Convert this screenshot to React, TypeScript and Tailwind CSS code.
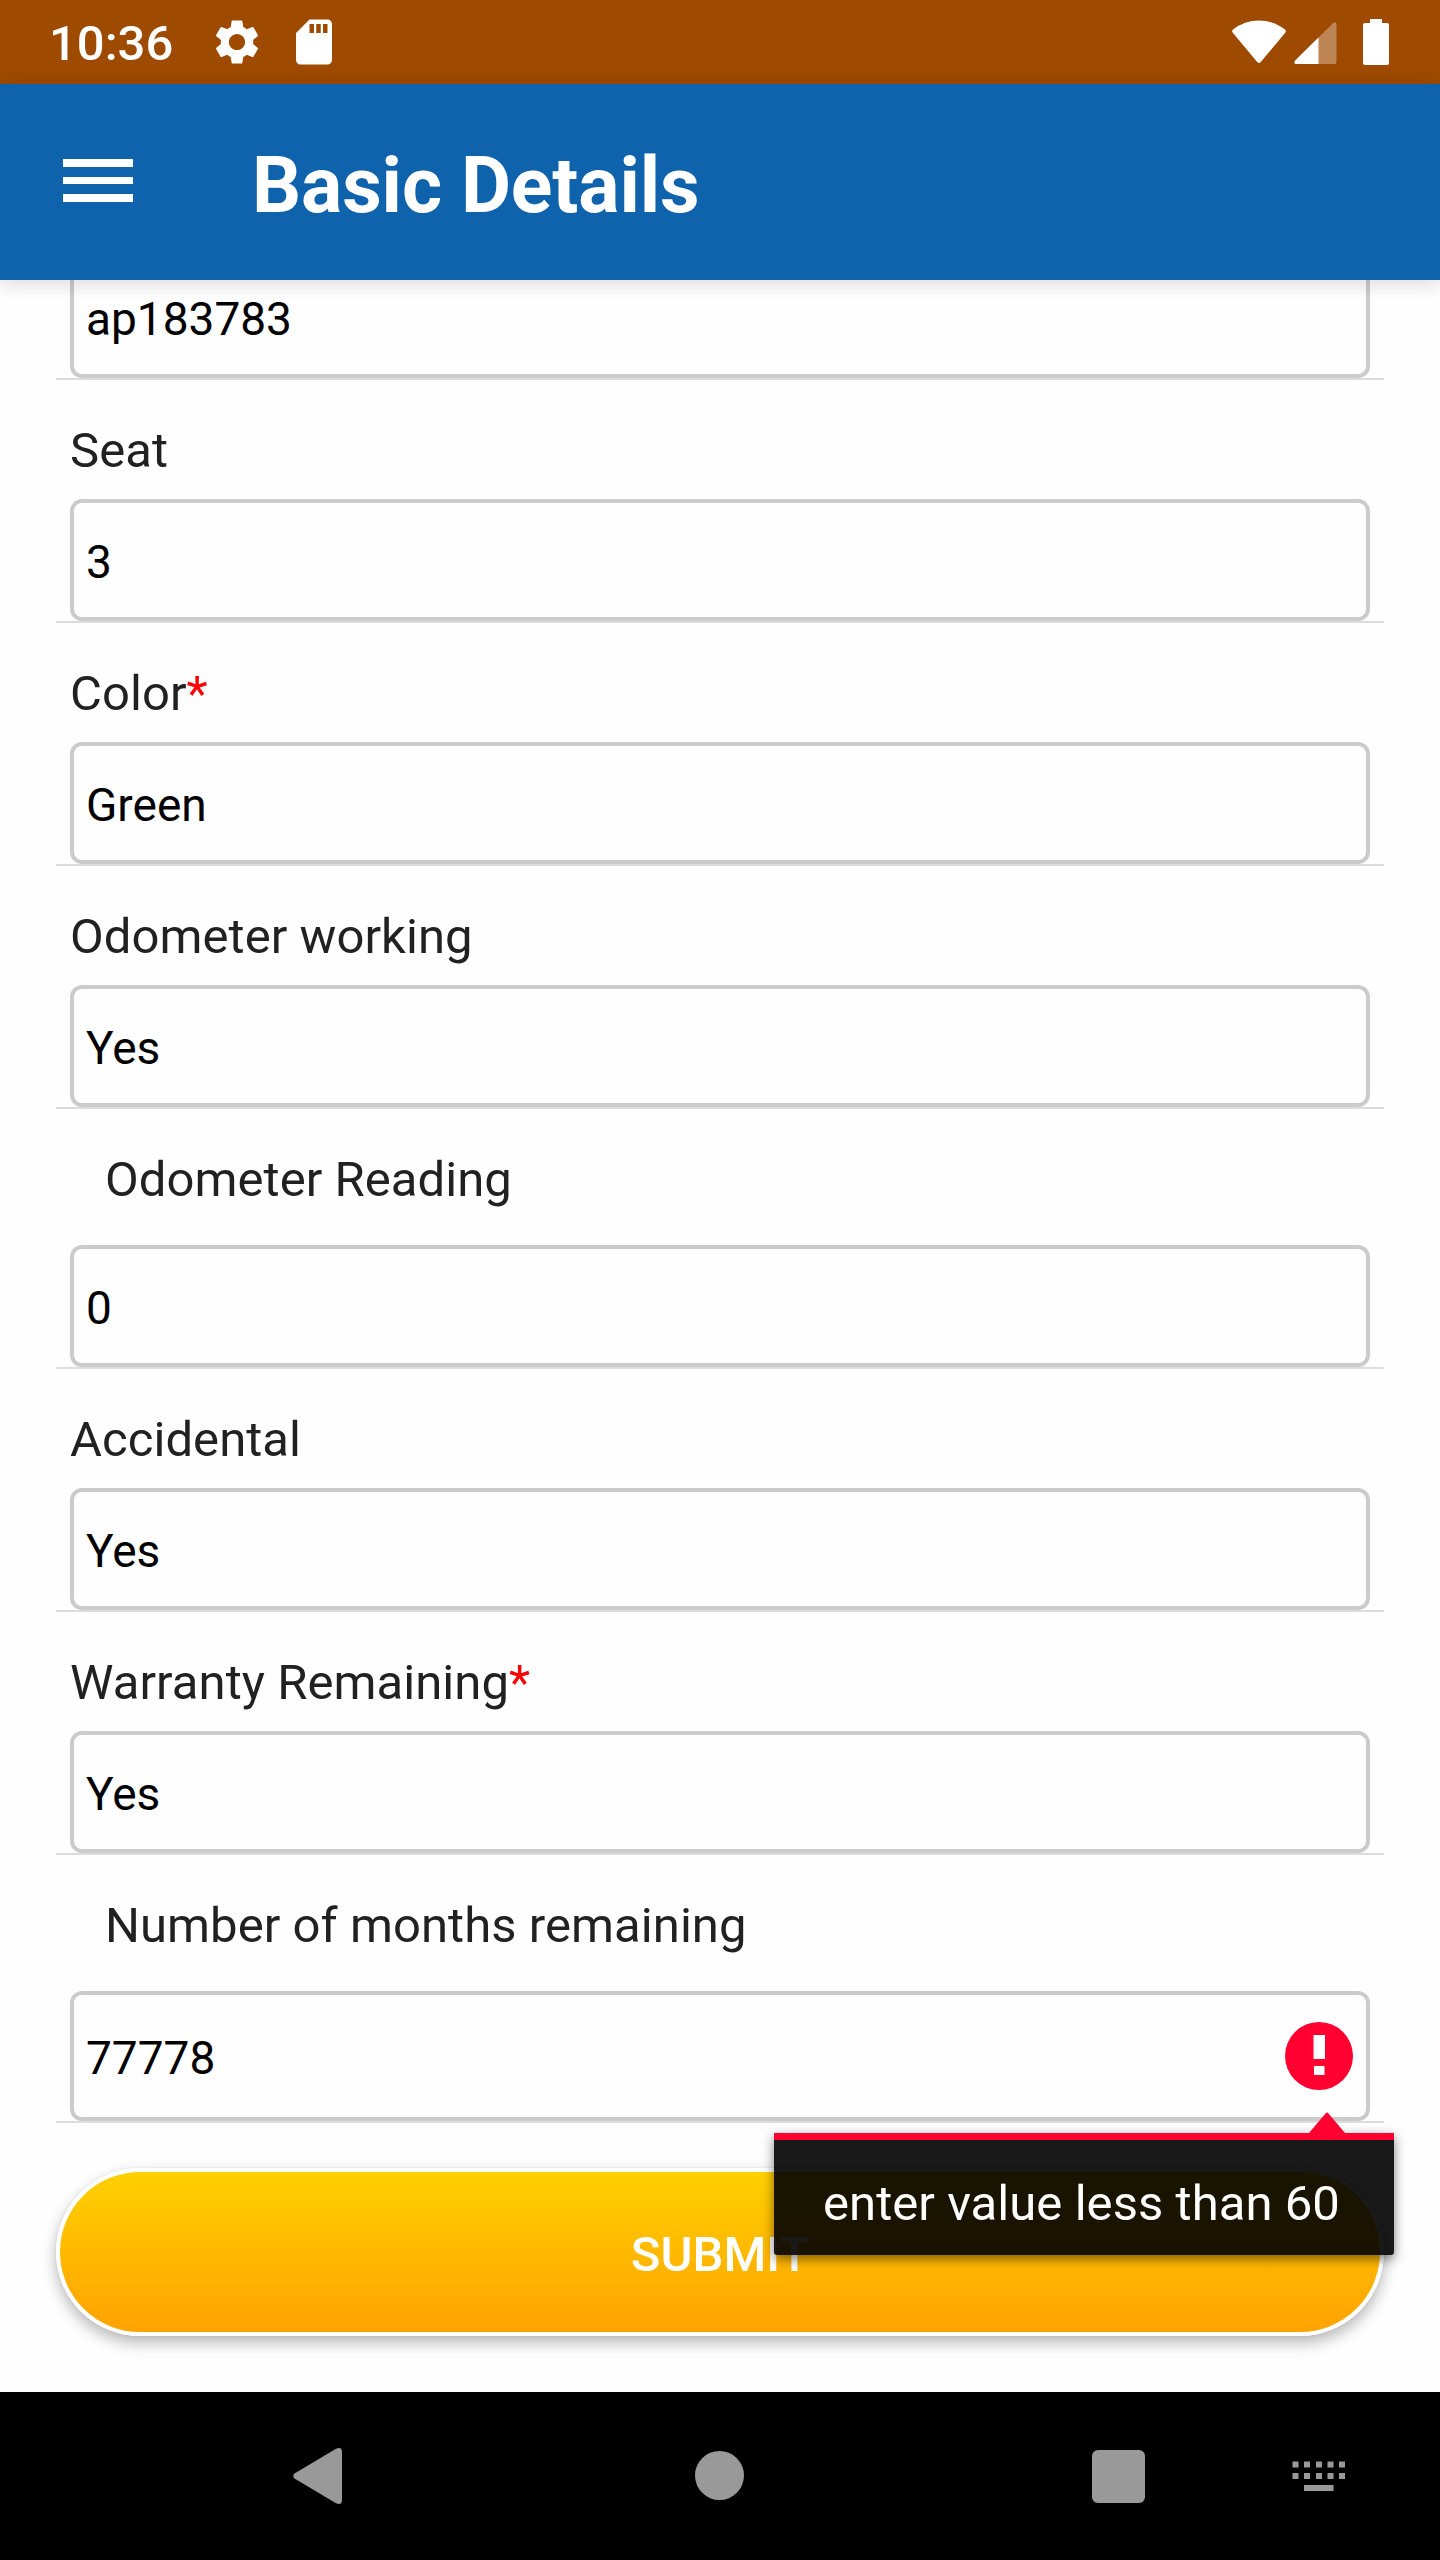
import React from "react";

type FieldProps = {
  label: string;
  value: string;
  required?: boolean;
  nested?: boolean;
  error?: string;
};

function StatusBar() {
  return (
    <div className="flex h-[84px] shrink-0 items-center bg-[#9e4a00] text-white">
      <span className="mt-[4px] ml-[49px] w-[126px] text-[49px] leading-[80px] font-medium whitespace-nowrap">10:36</span>
      <svg className="ml-[35px] h-[54px] w-[54px]" viewBox="0 0 24 24" fill="currentColor">
        <path d="M19.14 12.94c.04-.3.06-.61.06-.94 0-.32-.02-.64-.07-.94l2.03-1.58c.18-.14.23-.41.12-.61l-1.92-3.32c-.12-.22-.37-.29-.59-.22l-2.39.96c-.5-.38-1.03-.7-1.62-.94l-.36-2.54c-.04-.24-.24-.41-.48-.41h-3.84c-.24 0-.43.17-.47.41l-.36 2.54c-.59.24-1.13.57-1.62.94l-2.39-.96c-.22-.08-.47 0-.59.22L2.74 8.87c-.12.21-.08.47.12.61l2.03 1.58c-.05.3-.09.63-.09.94s.02.64.07.94l-2.03 1.58c-.18.14-.23.41-.12.61l1.92 3.32c.12.22.37.29.59.22l2.39-.96c.5.38 1.03.7 1.62.94l.36 2.54c.05.24.24.41.48.41h3.84c.24 0 .44-.17.47-.41l.36-2.54c.59-.24 1.13-.56 1.62-.94l2.39.96c.22.08.47 0 .59-.22l1.92-3.32c.12-.22.07-.47-.12-.61l-2.01-1.58zM12 15.6c-1.98 0-3.6-1.62-3.6-3.6s1.62-3.6 3.6-3.6 3.6 1.62 3.6 3.6-1.62 3.6-3.6 3.6z" />
      </svg>
      <svg className="ml-[23px] h-[54px] w-[54px]" viewBox="0 0 24 24" fill="currentColor">
        <path d="M18 2h-8L4.02 8 4 20c0 1.100.9 2 2 2h12c1.100 0 2-.9 2-2V4c0-1.100-.9-2-2-2zm-6 6h-2V4h2v4zm3 0h-2V4h2v4zm3 0h-2V4h2v4z" />
      </svg>
      <svg className="mb-[2px] ml-auto h-[43px] w-[54px]" viewBox="0 0 54 43" fill="currentColor">
        <path d="M1 9.500Q12.500 .5 27 .5T53 9.500Q54.500 11 53 13L28.800 42Q27 43.800 25.200 42L1 13Q-.5 11 1 9.500Z" />
      </svg>
      <svg className="mt-[2px] ml-[8px] h-[42px] w-[43px]" viewBox="0 0 43 42" fill="currentColor">
        <path d="M39.500.7Q42.500-.8 42.500 2.500V40Q42.500 42 40.500 42H2.500Q-.8 42 1.200 38.500Z" opacity=".33" />
        <path d="M24.500 15.500V42H2.500Q-.8 42 1.200 38.500Z" />
      </svg>
      <svg className="mr-[51px] ml-[26px] h-[46px] w-[26px]" viewBox="0 0 26 46" fill="currentColor">
        <path d="M7 0H19V4H24Q26 4 26 6V44Q26 46 24 46H2Q0 46 0 44V6Q0 4 2 4H7Z" />
      </svg>
    </div>
  );
}

function AppBar() {
  return (
    <header className="relative z-10 flex h-[196px] shrink-0 items-center bg-[#0f62ac] text-white shadow-[0_4px_18px_rgba(0,0,0,0.15)]">
      <div className="mb-[3px] ml-[63px] flex w-[70px] flex-col gap-[10px]">
        <div className="h-[7.500px] bg-white" />
        <div className="h-[7.500px] bg-white" />
        <div className="h-[7.500px] bg-white" />
      </div>
      <h1 className="mt-[8px] ml-[119px] text-[77px] leading-[90px] font-bold tracking-[-0.1px] whitespace-nowrap">Basic Details</h1>
    </header>
  );
}

function ErrorIcon() {
  return (
    <svg className="mr-[13.500px] ml-auto h-[68px] w-[68px]" viewBox="0 0 68 68">
      <circle cx="34" cy="34" r="34" fill="#ff0031" />
      <path d="M28.500 13H40V37H28.500ZM29 44H39.500V53H29Z" fill="#fff" />
    </svg>
  );
}

function ErrorPopup({ message }: { message: string }) {
  return (
    <div className="absolute top-[117px] left-[700px] z-20 w-[620px]">
      <svg className="ml-[535px] block h-[21px] w-[36px]" viewBox="0 0 36 21">
        <path d="M0 21L16.500 1.500Q18-.5 19.500 1.500L36 21Z" fill="#ff0031" />
      </svg>
      <div className="h-[122px] rounded-b-[3px] border-t-[7px] border-[#ff0031] bg-black/90 pl-[49px] text-[49px] leading-[128px] tracking-[0.06px] whitespace-nowrap text-white shadow-[0_4px_12px_rgba(0,0,0,0.5)]">
        {message}
      </div>
    </div>
  );
}

function Field({ label, value, required, nested, error }: FieldProps) {
  return (
    <div className="border-b-2 border-[#dcdcdc] px-[14px]">
      <div className={nested ? "h-[136px] pt-[42px] pl-[35px]" : "h-[119px] pt-[42px]"}>
        <div className="text-[49px] leading-[57px] tracking-[0.06px] whitespace-nowrap text-[#212121]">
          {label}
          {required && <span className="text-[#ff0000]">*</span>}
        </div>
      </div>
      <div
        className={
          error
            ? "relative flex h-[130px] items-center rounded-[12px] border-4 border-[#cbcbcb] pl-[12px]"
            : "relative flex h-[122px] items-center rounded-[12px] border-4 border-[#cbcbcb] pl-[12px]"
        }
      >
        <span className="mt-[3px] text-[46px] leading-[54px] text-black">{value}</span>
        {error && <ErrorIcon />}
        {error && <ErrorPopup message={error} />}
      </div>
    </div>
  );
}

function NavigationBar() {
  return (
    <nav className="flex h-[168px] shrink-0 items-center bg-black text-[#999999]">
      <svg className="ml-[293px] h-[56px] w-[49px]" viewBox="0 0 49 56" fill="currentColor">
        <path d="M1.500 25.500L43 .8Q49-1.500 49 4V52Q49 57.500 43 55.200L1.500 30.500Q-1 28 1.500 25.500Z" />
      </svg>
      <div className="mb-[1px] ml-[353px] h-[49px] w-[49px] rounded-full bg-[#999999]" />
      <div className="ml-[347.500px] h-[53px] w-[53px] rounded-[6px] bg-[#999999]" />
      <svg className="ml-[147px] h-[31px] w-[54px]" viewBox="0 0 54 31" fill="currentColor">
        <path d="M.5.500h6v6h-6zM12 .5h6v6h-6zM24 .5h6v6h-6zM35.500.5h6v6h-6zM47 .5h6v6h-6zM.5 12h6v6h-6zM12 12h6v6h-6zM24 12h6v6h-6zM35.500 12h6v6h-6zM47 12h6v6h-6zM12 24h29.500v6H12z" />
      </svg>
    </nav>
  );
}

export default function App() {
  return (
    <div className="flex h-[2560px] w-[1440px] flex-col overflow-hidden bg-white font-[Roboto,sans-serif]">
      <StatusBar />
      <AppBar />
      <main className="flex h-[2112px] shrink-0 flex-col bg-[#fefefe] px-[56px]">
        <div className="border-b-2 border-[#dcdcdc] px-[14px]">
          <div className="h-[98px] rounded-b-[12px] border-4 border-t-0 border-[#cbcbcb] pt-[12px] pl-[12px] text-[46px] leading-[54px] text-black">
            ap183783
          </div>
        </div>
        <Field label="Seat" value="3" />
        <Field label="Color" value="Green" required />
        <Field label="Odometer working" value="Yes" />
        <Field label="Odometer Reading" value="0" nested />
        <Field label="Accidental" value="Yes" />
        <Field label="Warranty Remaining" value="Yes" required />
        <Field label="Number of months remaining" value="77778" nested error="enter value less than 60" />
        <button className="mt-[45px] h-[168px] shrink-0 rounded-full border-4 border-white bg-linear-to-b from-[#ffd000] to-[#ffa200] pt-[5px] text-[49px] font-medium text-white shadow-[0_7px_15px_rgba(0,0,0,0.28),0_0_3px_rgba(0,0,0,0.08)]">
          SUBMIT
        </button>
      </main>
      <NavigationBar />
    </div>
  );
}
